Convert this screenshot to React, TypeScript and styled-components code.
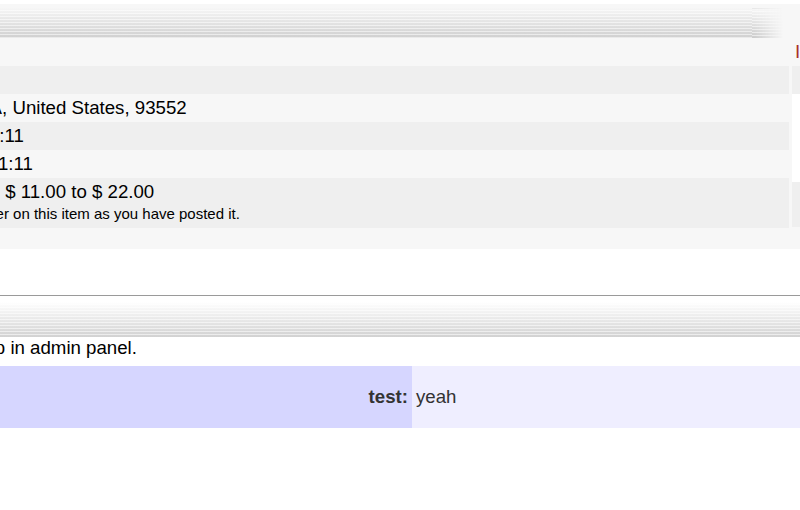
import { useLayoutEffect, useRef } from "react";
import styled, { createGlobalStyle } from "styled-components";

type Detail = {
  label: string;
  value: string;
  note?: string;
};

const details: Detail[] = [
  { label: "Category:", value: "Other" },
  { label: "Location:", value: "Palmdale, CA, United States, 93552" },
  { label: "Posted:", value: "5/11/2013, 11:11" },
  { label: "Expires:", value: "11/11/2013, 11:11" },
  {
    label: "Price:",
    value: "Ranging from $ 11.00 to $ 22.00",
    note: "You must not offer on this item as you have posted it.",
  },
];

const GlobalStyle = createGlobalStyle`
  html, body {
    margin: 0;
    padding: 0;
    background: #fff;
  }
  body {
    overflow: hidden;
    font-family: "Liberation Sans", Arial, sans-serif;
    font-size: 18.67px;
    color: #000;
  }
`;

const Viewport = styled.div`
  width: 800px;
  height: 510px;
  overflow: hidden;
`;

const Page = styled.div`
  width: 1300px;
`;

const Panel = styled.section`
  background: #f7f7f7;
  margin-top: 4px;
  padding: 4px 0 21px;
`;

// striped header band, light on top and darker lines towards the bottom
const Stripes = styled.div<{ $from: string; $to: string }>`
  background:
    repeating-linear-gradient(
      to bottom,
      rgba(255, 255, 255, 0) 0 2px,
      rgba(255, 255, 255, 0.55) 2px 3px
    ),
    linear-gradient(to bottom, ${({ $from }) => $from}, ${({ $to }) => $to});
`;

const StripeRow = styled.div`
  display: flex;
  height: 30px;
`;

const StripeBody = styled(Stripes)`
  width: 977px;
`;

const StripeCap = styled(Stripes)`
  width: 31px;
  background-position: 0 1px;
  -webkit-mask-image: linear-gradient(to right, #000 10%, transparent);
  mask-image: linear-gradient(to right, #000 10%, transparent);
`;

const SectionStripe = styled(Stripes)`
  height: 35px;
  margin-top: 6px;
`;

const Columns = styled.div`
  display: grid;
  grid-template-columns: 1014px 1fr;
  column-gap: 3px;
  align-items: start;
`;

const HeaderRow = styled(Columns)`
  height: 28px;
  line-height: 28px;
`;

const Title = styled.div`
  padding-left: 4px;
  font-weight: bold;
`;

const SideLink = styled.a`
  padding: 0 3px;
  color: #a8322a;
  text-decoration: none;
`;

const Table = styled.div`
  display: flex;
  flex-direction: column;
`;

const Row = styled.div<{ $shaded: boolean; $tall?: boolean }>`
  display: grid;
  grid-template-columns: 109px 1fr;
  background: ${({ $shaded }) => ($shaded ? "#efefef" : "#f7f7f7")};
  height: ${({ $tall }) => ($tall ? 50 : 28)}px;
  line-height: ${({ $tall }) => ($tall ? 21 : 28)}px;
  padding-top: ${({ $tall }) => ($tall ? 3 : 0)}px;
  box-sizing: border-box;
`;

const Label = styled.div`
  padding-left: 4px;
  font-weight: bold;
`;

const Value = styled.div`
  padding: 0 4px;
  white-space: nowrap;
`;

const Note = styled.div`
  margin-top: 3px;
  font-size: 15px;
  line-height: 17px;
`;

const SideBox = styled.aside`
  display: flex;
  flex-direction: column;
`;

const SideCell = styled.div<{ $h: number; $shaded: boolean }>`
  height: ${({ $h }) => $h}px;
  background: ${({ $shaded }) => ($shaded ? "#efefef" : "#fff")};
`;

const Rule = styled.hr`
  margin: 46px 0 0;
  border: 0;
  border-top: 1px solid #9a9a9a;
  height: 0;
`;

const Notice = styled.p`
  margin: 0 0 8px;
  line-height: 21px;
`;

const FieldTable = styled.div`
  display: grid;
  grid-template-columns: 637px 1fr;
  color: #333;
  line-height: 21px;
`;

const FieldLabel = styled.div`
  background: #d6d6ff;
  padding: 20px 4px 21px;
  text-align: right;
  font-weight: bold;
`;

const FieldValue = styled.div`
  background: #efeeff;
  padding: 20px 4px 21px;
`;

export default function App() {
  const viewRef = useRef<HTMLDivElement>(null);

  // the listing sits scrolled sideways inside the window
  useLayoutEffect(() => {
    if (viewRef.current) viewRef.current.scrollLeft = 225;
  }, []);

  return (
    <>
      <GlobalStyle />
      <Viewport ref={viewRef}>
        <Page>
          <Panel>
            <StripeRow>
              <StripeBody $from="#f6f6f6" $to="#d0d0d0" />
              <StripeCap $from="#f6f6f6" $to="#cbcbcb" />
            </StripeRow>
            <HeaderRow>
              <Title>Ad details</Title>
              <SideLink href="#">Inquire</SideLink>
            </HeaderRow>
            <Columns>
              <Table>
                {details.map((d, i) => (
                  <Row key={d.label} $shaded={i % 2 === 0} $tall={!!d.note}>
                    <Label>{d.label}</Label>
                    <Value>
                      {d.value}
                      {d.note && <Note>{d.note}</Note>}
                    </Value>
                  </Row>
                ))}
              </Table>
              <SideBox>
                <SideCell $h={28} $shaded />
                <SideCell $h={88} $shaded={false} />
                <SideCell $h={45} $shaded />
              </SideBox>
            </Columns>
          </Panel>

          <Rule />
          <SectionStripe $from="#ffffff" $to="#d2d2d2" />
          <Notice>Custom fields can be set up in admin panel.</Notice>
          <FieldTable>
            <FieldLabel>test:</FieldLabel>
            <FieldValue>yeah</FieldValue>
          </FieldTable>
        </Page>
      </Viewport>
    </>
  );
}
